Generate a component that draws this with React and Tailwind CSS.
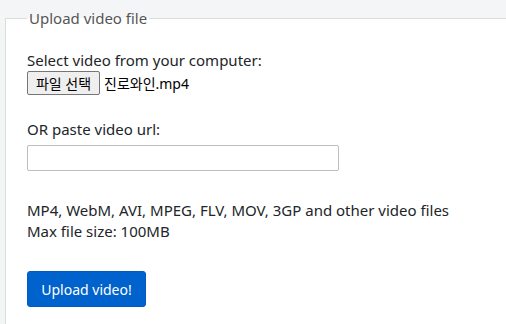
export default function App() {
  const font = { fontFamily: '"Noto Sans", "Noto Sans CJK KR", sans-serif' };
  return (
    <div className="w-[506px] h-[324px] overflow-hidden bg-[#f4f5f7] pt-[8px] pl-[5px]" style={font}>
      <fieldset className="w-[540px] h-[340px] border border-[#dcdcdc] bg-white px-[21px] pt-[21px] m-0">
        <legend className="px-[2px] text-[15px] leading-[20px] text-[#555]">Upload video file</legend>
        <div className="text-[15px] leading-[20px] text-[#212529] mt-[1px]">Select video from your computer:</div>
        <div className="flex items-center mt-[1px] h-[24px]">
          <span className="flex items-center justify-center h-[24px] w-[73px] bg-[#efefef] border border-[#767676] rounded-[2px] text-[14px] text-black">
            파일 선택
          </span>
          <span className="ml-[4px] text-[14px] text-black">진로와인.mp4</span>
        </div>
        <div className="text-[15px] leading-[20px] text-[#212529] mt-[24px]">OR paste video url:</div>
        <div className="mt-[6px] w-[312px] h-[26px] border border-[#bdbdbd] rounded-[2px] bg-white"></div>
        <div className="mt-[29px] text-[15px] leading-[21px] text-[#212529]">
          <div>MP4, WebM, AVI, MPEG, FLV, MOV, 3GP and other video files</div>
          <div>Max file size: 100MB</div>
        </div>
        <div className="mt-[29px]">
          <span className="inline-flex items-center justify-center w-[119px] h-[36px] bg-[#0062cc] border border-[#005cbf] rounded-[3px] text-white text-[14px]">
            Upload video!
          </span>
        </div>
      </fieldset>
    </div>
  );
}
